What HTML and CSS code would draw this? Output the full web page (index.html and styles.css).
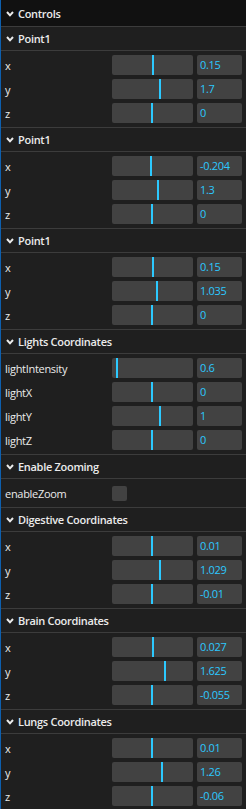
FILE: index.html
```html
<!DOCTYPE html>
<html lang="en">
<head>
    <meta charset="UTF-8">
    <meta name="viewport" content="width=device-width, initial-scale=1.0">
    <title>Controls</title>
    <link rel="stylesheet" href="styles.css">
</head>
<body>
    <div class="gui">
        <div class="gui-title">
            <svg class="chevron" width="8" height="6" viewBox="0 0 8 6"><path d="M1 1 L4 4.3 L7 1" /></svg>
            <span>Controls</span>
        </div>
        <div id="folders"></div>
    </div>

    <script>
        const folders = [
            { title: "Point1", rows: [["x", "0.15", 42], ["y", "1.7", 49], ["z", "0", 41]] },
            { title: "Point1", rows: [["x", "-0.204", 40], ["y", "1.3", 47], ["z", "0", 41]] },
            { title: "Point1", rows: [["x", "0.15", 42], ["y", "1.035", 46], ["z", "0", 41]] },
            { title: "Lights Coordinates", rows: [["lightIntensity", "0.6", 6], ["lightX", "0", 41], ["lightY", "1", 49], ["lightZ", "0", 41]] },
            { title: "Enable Zooming", checkbox: "enableZoom" },
            { title: "Digestive Coordinates", rows: [["x", "0.01", 41], ["y", "1.029", 49], ["z", "-0.01", 41]] },
            { title: "Brain Coordinates", rows: [["x", "0.027", 42], ["y", "1.625", 54], ["z", "-0.055", 41]] },
            { title: "Lungs Coordinates", rows: [["x", "0.01", 41], ["y", "1.26", 51], ["z", "-0.06", 41]] }
        ];

        const container = document.getElementById('folders');
        const chevron = '<svg class="chevron" width="8" height="6" viewBox="0 0 8 6"><path d="M1 1 L4 4.3 L7 1" /></svg>';

        folders.forEach(folder => {
            const el = document.createElement('div');
            el.className = 'folder';

            let rows = '';
            if (folder.checkbox) {
                rows = `
                    <div class="row">
                        <span class="name">${folder.checkbox}</span>
                        <span class="checkbox"></span>
                    </div>`;
            } else {
                folder.rows.forEach(([name, value, fill]) => {
                    rows += `
                        <div class="row">
                            <span class="name">${name}</span>
                            <div class="slider"><div class="fill" style="width: ${fill}px"></div></div>
                            <span class="number">${value}</span>
                        </div>`;
                });
            }

            el.innerHTML = `
                <div class="folder-title">${chevron}<span>${folder.title}</span></div>
                <div class="children">${rows}</div>
            `;
            container.appendChild(el);
        });
    </script>
</body>
</html>
```

FILE: styles.css
```css
body {
    margin: 0;
    padding: 0;
    background-color: #1f1f1f;
    font-family: "Open Sans", "Noto Sans", sans-serif;
    font-size: 11px;
    letter-spacing: -0.3px;
    color: #ebebeb;
}
.gui {
    width: 246px;
    box-sizing: border-box;
    border-left: 1px solid #0d5fae;
    background-color: #1f1f1f;
}
.gui-title,
.folder-title {
    display: flex;
    align-items: center;
    gap: 4px;
    padding-left: 5px;
    font-weight: 600;
    color: #ebebeb;
}
.gui-title {
    height: 26px;
    background-color: #111111;
}
.folder-title {
    height: 23px;
    border-top: 1px solid #3c3c3c;
    border-bottom: 1px solid #3c3c3c;
}
.chevron {
    flex-shrink: 0;
    margin-top: 1px;
}
.chevron path {
    fill: none;
    stroke: #ebebeb;
    stroke-width: 2;
}
.children {
    display: flex;
    flex-direction: column;
    gap: 4px;
    padding: 4px 4px 4px 4px;
}
.row {
    display: flex;
    align-items: center;
    height: 20px;
}
.name {
    width: 107px;
    flex-shrink: 0;
    white-space: nowrap;
}
.slider {
    width: 81px;
    height: 20px;
    background-color: #424242;
    border-radius: 2px;
    overflow: hidden;
}
.fill {
    height: 100%;
    box-sizing: border-box;
    border-right: 2px solid #2cc9ff;
}
.number {
    width: 45px;
    height: 20px;
    margin-left: 4px;
    box-sizing: border-box;
    padding-left: 3px;
    line-height: 20px;
    background-color: #424242;
    border-radius: 2px;
    color: #2cc9ff;
}
.checkbox {
    width: 15px;
    height: 15px;
    background-color: #424242;
    border-radius: 2px;
}
```
